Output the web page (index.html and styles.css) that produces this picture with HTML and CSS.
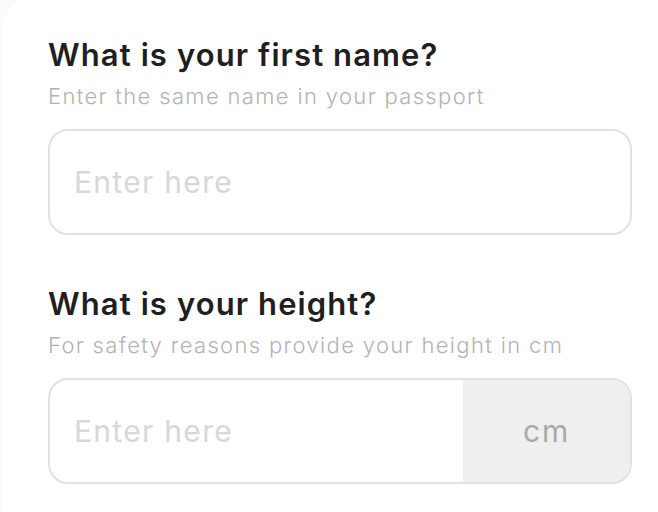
FILE: index.html
```html
<!DOCTYPE html>
<html lang="en">
<head>
<meta charset="utf-8">
<title>Form</title>
<link rel="stylesheet" href="styles.css">
</head>
<body>
<main class="card">
  <section class="field">
    <h2 class="label">What is your first name?</h2>
    <p class="hint">Enter the same name in your passport</p>
    <div class="box">
      <input class="input" type="text" placeholder="Enter here">
    </div>
  </section>
  <section class="field">
    <h2 class="label">What is your height?</h2>
    <p class="hint">For safety reasons provide your height in cm</p>
    <div class="box">
      <input class="input" type="text" placeholder="Enter here">
      <span class="unit">cm</span>
    </div>
  </section>
</main>
</body>
</html>
```
FILE: styles.css
```css
* { box-sizing: border-box; }
html, body {
  margin: 0;
  padding: 0;
  background: #ffffff;
  overflow: hidden;
  height: 100%;
}
body {
  font-family: Inter, "Noto Sans", sans-serif;
}
.card {
  margin-left: 2px;
  margin-top: -6px;
  height: calc(100% + 6px);
  background: #ffffff;
  border-radius: 36px 0 0 0;
  box-shadow: 0 0 26px rgba(0, 0, 0, 0.06);
  padding: 43px 26px 0 46px;
  display: flex;
  flex-direction: column;
  gap: 51px;
}
.field {
  display: flex;
  flex-direction: column;
}
.label {
  margin: 0;
  font-size: 31px;
  line-height: 36px;
  font-weight: 600;
  color: #1f1f1f;
  letter-spacing: 1.1px;
}
.hint {
  margin: 10px 0 20px;
  font-size: 22px;
  line-height: 26px;
  font-weight: 300;
  color: #b3b3b3;
  letter-spacing: 1.35px;
}
.box {
  display: flex;
  height: 106px;
  border: 2px solid #e1e1e1;
  border-radius: 20px;
  overflow: hidden;
  background: #ffffff;
}
.input {
  flex: 1;
  min-width: 0;
  border: 0;
  outline: none;
  background: transparent;
  padding: 0 0 0 24px;
  font-family: inherit;
  font-size: 30px;
  letter-spacing: 1.3px;
  color: #333;
}
.input::placeholder {
  color: #d8d8d8;
  font-weight: 400;
}
.unit {
  width: 167px;
  display: flex;
  align-items: center;
  justify-content: center;
  background: #efefef;
  font-size: 30px;
  letter-spacing: 1.8px;
  color: #a9a9a9;
}
```
